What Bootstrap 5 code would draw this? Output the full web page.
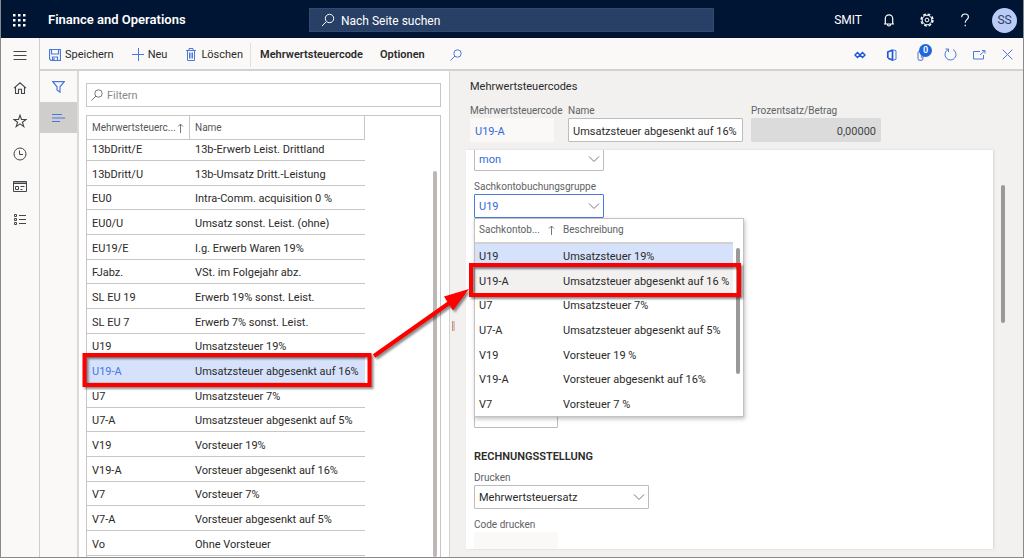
<!DOCTYPE html>
<html lang="de">
<head>
<meta charset="utf-8">
<meta name="viewport" content="width=device-width, initial-scale=1">
<title>Finance and Operations – Mehrwertsteuercodes</title>
<link rel="stylesheet" href="https://cdn.jsdelivr.net/npm/bootstrap@5.3.0/dist/css/bootstrap.min.css">
<style>
  body { font-family: Roboto, "Open Sans", sans-serif; font-size: 11px; line-height: 16px; color: #2b2a29; }
  button, input, select { font: inherit; color: inherit; }
  button { background: none; border: 0; padding: 0; }
  svg { fill: none; stroke: currentColor; display: block; flex: none; }
  a { color: inherit; text-decoration: none; }
  .shell { border: 1px solid #8a8a8a; border-top: 0; }

  .topbar { height: 38px; background: #001433; color: #fff; font-size: 12px; padding: 2px 6px 0 12px; }
  .brand { font-weight: 600; font-size: 13px; margin-left: 22px; width: 261px; }
  .page-search { background: #283f66; border: 1px solid #344a70; width: 405px; height: 24px; padding-left: 11px; }
  .page-search input { background: none; border: 0; outline: 0; padding: 2px 0 0; margin-left: 6px; }
  .page-search input::placeholder { color: #fff; opacity: 1; }
  .top-tools { gap: 20px; }
  .avatar { width: 25px; height: 25px; background: #b9ccf5; color: #2f3f63; font-size: 12px; }

  .siderail { width: 39px; background: #faf9f8; border-right: 1px solid #cfcdcb; color: #44474a; }
  .siderail button { height: 33px; }
  .actionbar { height: 33px; background: #faf9f8; border-bottom: 2px solid #d4d2d0; padding: 2px 6px 0 9px; }
  .menu-cmds { gap: 17px; }
  .cmds { gap: 18px; }
  .accent { color: #4b78dc; }
  .vsep { width: 1px; height: 24px; background: #e1dfdd; margin: 0 9px 0 7px; }
  .act-tools { gap: 16px; }
  .count { background: #1e66dc; color: #fff; width: 13px; height: 13px; font-size: 9px; line-height: 13px; top: -5px; left: 2px; }

  .viewrail { width: 39px; background: #faf9f8; border-right: 2px solid #dcdad8; }
  .viewrail button { height: 31px; }
  .viewrail .on { background: #d0cecc; }

  .listpane { width: 371px; padding: 12px 8px 0 7px; border-right: 1px solid #d6d4d2; }
  .filterbox { height: 24px; border: 1px solid #c8c6c4; padding-left: 4px; }
  .filterbox input { border: 0; outline: 0; padding: 2px 0 0; }
  .filterbox input::placeholder { color: #8b8987; opacity: 1; }
  .gridbox { margin-top: 8px; border: 1px solid #c8c6c4; border-bottom: 0; }
  .gtable { border-collapse: separate; border-spacing: 0; table-layout: fixed; width: 278px; }
  .gtable th { font-weight: 400; color: #555759; font-size: 10px; height: 24px; padding: 0 5px; border-right: 1px solid #c8c6c4; border-bottom: 1px solid #c8c6c4; white-space: nowrap; }
  .gtable td { height: 25px; padding: 3px 5px 0; line-height: 16px; border-bottom: 1px solid #c8c6c4; white-space: nowrap; }
  .gtable tbody tr:nth-child(3n) td { height: 24px; }
  .gtable tbody tr:first-child td { height: 21px; padding-top: 0; padding-bottom: 1px; }
  .gtable .picked td { background: #d6e2fb; }
  .thumb { width: 4px; border-radius: 2px; background: #9b9997; }
  .thumb-list { background: #bdb8b5; top: 55px; bottom: 0; right: 3px; }
  .thumb-pop { top: 29px; height: 126px; right: 3px; }
  .thumb-form { top: 114px; height: 138px; right: 18px; }

  .formpane { background: #f2f1f0; padding: 8px 30px 8px 16px; }
  .formpane h1 { font-size: 11px; line-height: 16px; font-weight: 400; margin: 0 0 8px 4px; }
  .flabel { display: block; font-size: 10px; line-height: 15px; color: #606264; white-space: nowrap; }
  .fbox { height: 24px; border: 1px solid #bebcba; border-radius: 1px; background-color: #fff; padding: 2px 4px 0; outline: 0; display: block; }
  .fbox.ro { background: #faf9f8; border-color: #faf9f8; }
  .fbox.off { background: #dbdbdb; border-color: #dbdbdb; color: #444; }
  select.fbox { appearance: none; background: #fff url("data:image/svg+xml,%3Csvg xmlns='http://www.w3.org/2000/svg' width='12' height='8' fill='none' stroke='%23777'%3E%3Cpath d='M1 1.5l5 5 5-5'/%3E%3C/svg%3E") no-repeat right 3px center; }
  .fbox.link-like { color: #3568d9; }
  .fbox.active { border-color: #4a79e0; }
  .w-code { width: 84px; } .w-name { width: 175px; } .w-pct { width: 130px; }
  .w-group { width: 130px; } .w-print { width: 175px; }
  .code-col { width: 90px; }
  .hdr-fields { margin-left: 4px; gap: 8px; }
  .formcard { margin-top: 8px; background: #fff; padding-left: 8px; box-shadow: 1px 0 2px rgba(0,0,0,.12); }
  .cut { margin-top: -3px; }
  .gap-field { margin-top: 8px; }
  .behind { margin-top: 186px; }
  .sect { font-size: 11px; font-weight: 600; line-height: 16px; margin: 21px 0 5px; }

  .lookup { top: 24px; left: 0; width: 270px; height: 199px; background: #fff; border: 1px solid #c4c2c0; box-shadow: 1px 2px 4px rgba(0,0,0,.25); }
  .ltable { border-collapse: separate; border-spacing: 0; table-layout: fixed; width: 258px; }
  .ltable th { font-weight: 400; font-size: 10px; color: #606264; height: 25px; padding: 0 4px 2px; border-bottom: 2px solid #d4d2d0; white-space: nowrap; }
  .ltable td { height: 25px; padding: 0 4px; white-space: nowrap; }
  .ltable tbody tr:nth-child(3n) td { height: 24px; }
  .ltable .picked td { background: #d6e2fb; }
  .ltable .hovered td { background: #f2f1f0; }
  .grip { left: 2px; top: 250px; width: 3px; height: 10px; background: #c9c9c9; border-left: 1px solid #e08a70; }
  .callouts { left: 0; top: 0; pointer-events: none; filter: drop-shadow(2px 2px 1px rgba(0,0,0,.45)); }
</style>
</head>
<body class="position-relative">
<div class="shell vh-100 d-flex flex-column overflow-hidden">

  <header class="topbar d-flex align-items-center flex-shrink-0">
    <button aria-label="Apps"><svg width="13" height="13" viewBox="0 0 13 13"><path fill="#fff" stroke="none" d="M0 0h2.500v2.500H0zM5 0h2.500v2.500H5zM10 0h2.500v2.500H10zM0 5h2.500v2.500H0zM5 5h2.500v2.500H5zM10 5h2.500v2.500H10zM0 10h2.500v2.500H0zM5 10h2.500v2.500H5zM10 10h2.500v2.500H10z"/></svg></button>
    <a href="#" class="brand text-nowrap">Finance and Operations</a>
    <div class="page-search d-flex align-items-center">
      <svg width="14" height="14" viewBox="0 0 14 14"><circle cx="8.500" cy="5.500" r="4.200"/><path d="M5.500 8.500L1 13"/></svg>
      <input class="flex-grow-1" type="search" placeholder="Nach Seite suchen" aria-label="Nach Seite suchen">
    </div>
    <div class="top-tools d-flex align-items-center ms-auto">
      <span>SMIT</span>
      <button aria-label="Benachrichtigungen"><svg width="14" height="14" viewBox="0 0 14 14"><path d="M2 11h10M3.300 11V5.500a3.700 3.700 0 0 1 7.400 0V11M5.500 11.500a1.500 1.500 0 0 0 3 0" stroke-width="1.200"/></svg></button>
      <button class="ms-1" aria-label="Einstellungen"><svg width="14" height="14" viewBox="0 0 14 14"><circle cx="7" cy="7" r="5.900" stroke-width="1.500" stroke-dasharray="2.700 1.930"/><circle cx="7" cy="7" r="4.800"/><circle cx="7" cy="7" r="1.900"/></svg></button>
      <button class="ms-1" aria-label="Hilfe"><svg width="14" height="14" viewBox="0 0 14 14"><path d="M3.700 4.200C3.700 2 5.200 1 7 1s3.400 1 3.400 3c0 2.600-3.200 2.800-3.200 5.800M7.200 11.800v1.400" stroke-width="1.200"/></svg></button>
      <button class="avatar rounded-circle d-flex align-items-center justify-content-center">SS</button>
    </div>
  </header>

  <div class="d-flex flex-grow-1 overflow-hidden">
    <nav class="siderail d-flex flex-column flex-shrink-0">
      <button class="d-flex align-items-center justify-content-center" aria-label="Menü"><svg width="14" height="14" viewBox="0 0 14 14"><path d="M.5 3.500h13M.5 7.500h13M.5 11.500h13"/></svg></button>
      <button class="d-flex align-items-center justify-content-center" aria-label="Start"><svg width="14" height="14" viewBox="0 0 14 14"><path d="M1 7.200L7 1.800l6 5.400M2.500 6v6.500h3V8.200h3v4.300h3V6" stroke-width="1.100"/></svg></button>
      <button class="d-flex align-items-center justify-content-center" aria-label="Favoriten"><svg width="14" height="14" viewBox="0 0 14 14"><path d="M7 1.200l1.500 4.300h4.500L9.400 8.200l1.400 4.400L7 9.900l-3.800 2.700 1.400-4.400L1 5.500h4.500z" stroke-width="1.100"/></svg></button>
      <button class="d-flex align-items-center justify-content-center" aria-label="Zuletzt verwendet"><svg width="14" height="14" viewBox="0 0 14 14"><circle cx="7" cy="7" r="6"/><path d="M6.500 3.500v4h3.500"/></svg></button>
      <button class="d-flex align-items-center justify-content-center" aria-label="Arbeitsbereiche"><svg width="14" height="12" viewBox="0 0 14 12"><path d="M.5.500h13v10H.5zM.5 2.500h13"/><path d="M1 1.500h12" stroke="#9aa09f"/><path d="M2.500 5.500h3v3h-3zM7.500 5.500h4M7.500 8.500h2"/></svg></button>
      <button class="d-flex align-items-center justify-content-center" aria-label="Module"><svg width="14" height="12" viewBox="0 0 14 12"><path d="M1.500.500h2v2h-2zM1.500 4.500h2v2h-2zM1.500 8.500h2v2h-2zM6 1.500h7M6 5.500h7M6 9.500h7"/></svg></button>
    </nav>

    <div class="d-flex flex-column flex-grow-1 overflow-hidden">
      <div class="actionbar d-flex align-items-center flex-shrink-0 text-nowrap">
        <div class="cmds d-flex align-items-center">
          <button class="d-flex align-items-center gap-1"><svg class="accent" width="12" height="12" viewBox="0 0 12 12"><path d="M.5.500h11v11H2L.5 10zM2.500.500v4.500h7V.500M3.500 11.500V8h5v3.500M5 9v2" stroke-width="1.200"/></svg>Speichern</button>
          <button class="d-flex align-items-center gap-1"><svg class="accent" width="12" height="13" viewBox="0 0 12 13"><path d="M6.500 0v13M0 6.500h12"/></svg>Neu</button>
          <button class="d-flex align-items-center gap-1"><svg class="accent" width="12" height="13" viewBox="0 0 12 13"><path d="M1 2.500h10M4 2.500v-2h4v2M2.500 2.500v10h7v-10M4.500 4.500v6M6 4.500v6M7.500 4.500v6"/></svg>Löschen</button>
        </div>
        <span class="vsep"></span>
        <div class="menu-cmds d-flex align-items-center">
          <button class="fw-semibold">Mehrwertsteuercode</button>
          <button class="fw-semibold">Optionen</button>
          <button class="ms-2" aria-label="Suchen"><svg class="accent" width="12" height="12" viewBox="0 0 12 12"><circle cx="7.500" cy="4.500" r="3.700"/><path d="M5 7L.5 11.500"/></svg></button>
        </div>
        <div class="act-tools accent d-flex align-items-center ms-auto me-1">
          <button class="me-1" aria-label="Verbindungen"><svg width="12" height="8" viewBox="0 0 12 8"><path d="M1 4l2.500-2.500L6 4 3.500 6.500zM6 4l2.500-2.500L11 4 8.500 6.500z" stroke="#1e5bd8" stroke-width="1.500"/></svg></button>
          <button class="me-1" aria-label="In Office öffnen"><svg width="11" height="12" viewBox="0 0 11 12"><path d="M6.500 1L1.800 3v6M2 9.200l4.500 1.800V1" stroke="#1e5bd8" stroke-width="1.700"/><path d="M6.500.700l3.500 1v8.600l-3.500 1"/></svg></button>
          <button class="position-relative" aria-label="Anlagen"><svg width="11" height="12" viewBox="0 0 11 12"><path d="M6 3v6a2.500 2.500 0 0 1-5 0V3.500a2 2 0 0 1 3.500 0V9" stroke="#7f8fd8" stroke-width="1.300"/></svg><span class="count position-absolute rounded-circle text-center fw-semibold">0</span></button>
          <button aria-label="Aktualisieren"><svg width="13" height="13" viewBox="0 0 13 13"><path d="M4 1.600a5.500 5.500 0 1 0 5 0M1.500 1h3v3"/></svg></button>
          <button aria-label="In neuem Fenster öffnen"><svg width="13" height="12" viewBox="0 0 13 12"><path d="M7 2.500H.5v7.500h10V6M7 6l5-4.500M9 1.500h3v3"/></svg></button>
          <button aria-label="Schließen"><svg width="11" height="11" viewBox="0 0 11 11"><path d="M.7.700l9.600 9.600M10.300.700L.7 10.300"/></svg></button>
        </div>
      </div>

      <div class="d-flex flex-grow-1 overflow-hidden">
        <div class="viewrail accent flex-shrink-0">
          <button class="w-100 d-flex align-items-center justify-content-center" aria-label="Filter"><svg width="13" height="12" viewBox="0 0 13 12"><path d="M.8.700h11.400L8 5.800v5.400L5 9V5.800z" stroke-width="1.200"/></svg></button>
          <button class="on w-100 d-flex align-items-center justify-content-center" aria-label="Liste"><svg width="13" height="10" viewBox="0 0 13 10"><path d="M0 1.500h10M0 5h13M0 8.500h8" stroke-width="1.200"/></svg></button>
        </div>

        <section class="listpane flex-shrink-0 d-flex flex-column">
          <div class="filterbox d-flex align-items-center flex-shrink-0">
            <svg width="12" height="12" viewBox="0 0 12 12"><g stroke="#777"><circle cx="7.500" cy="4.500" r="3.700"/><path d="M5 7L.5 11.500"/></g></svg>
            <input class="ms-1 flex-grow-1" type="search" placeholder="Filtern" aria-label="Filtern">
          </div>
          <div class="gridbox position-relative flex-grow-1 overflow-hidden">
            <table class="gtable">
              <colgroup><col style="width:103px"><col></colgroup>
              <thead><tr><th scope="col"><span class="d-flex justify-content-between align-items-center">Mehrwertsteuerc...<svg width="7" height="10" viewBox="0 0 7 10"><path d="M3.500 10V1M1 3.500L3.500 1 6 3.500" stroke="#777"/></svg></span></th><th scope="col">Name</th></tr></thead>
              <tbody>
                <tr><td>13bDritt/E</td><td>13b-Erwerb Leist. Drittland</td></tr>
                <tr><td>13bDritt/U</td><td>13b-Umsatz Dritt.-Leistung</td></tr>
                <tr><td>EU0</td><td>Intra-Comm. acquisition 0 %</td></tr>
                <tr><td>EU0/U</td><td>Umsatz sonst. Leist. (ohne)</td></tr>
                <tr><td>EU19/E</td><td>I.g. Erwerb Waren 19%</td></tr>
                <tr><td>FJabz.</td><td>VSt. im Folgejahr abz.</td></tr>
                <tr><td>SL EU 19</td><td>Erwerb 19% sonst. Leist.</td></tr>
                <tr><td>SL EU 7</td><td>Erwerb 7% sonst. Leist.</td></tr>
                <tr><td>U19</td><td>Umsatzsteuer 19%</td></tr>
                <tr class="picked"><td><a href="#" class="accent">U19-A</a></td><td>Umsatzsteuer abgesenkt auf 16%</td></tr>
                <tr><td>U7</td><td>Umsatzsteuer 7%</td></tr>
                <tr><td>U7-A</td><td>Umsatzsteuer abgesenkt auf 5%</td></tr>
                <tr><td>V19</td><td>Vorsteuer 19%</td></tr>
                <tr><td>V19-A</td><td>Vorsteuer abgesenkt auf 16%</td></tr>
                <tr><td>V7</td><td>Vorsteuer 7%</td></tr>
                <tr><td>V7-A</td><td>Vorsteuer abgesenkt auf 5%</td></tr>
                <tr><td>Vo</td><td>Ohne Vorsteuer</td></tr>
              </tbody>
            </table>
            <div class="thumb thumb-list position-absolute"></div>
          </div>
        </section>

        <main class="formpane position-relative flex-grow-1 d-flex flex-column overflow-hidden">
          <div class="grip position-absolute"></div>
          <h1>Mehrwertsteuercodes</h1>
          <div class="hdr-fields d-flex">
            <div class="code-col"><label class="flabel" for="code">Mehrwertsteuercode</label><input id="code" class="fbox ro link-like w-code" value="U19-A" readonly></div>
            <div><label class="flabel" for="name">Name</label><input id="name" class="fbox w-name" value="Umsatzsteuer abgesenkt auf 16%"></div>
            <div><label class="flabel" for="pct">Prozentsatz/Betrag</label><input id="pct" class="fbox off w-pct text-end" value="0,00000" readonly></div>
          </div>
          <div class="formcard flex-grow-1 overflow-hidden">
            <select class="fbox link-like w-group cut" aria-label="Abrechnungszeitraum"><option>mon</option></select>
            <label class="flabel gap-field" for="grp">Sachkontobuchungsgruppe</label>
            <div class="position-relative">
              <select id="grp" class="fbox link-like active w-group"><option>U19</option></select>
              <div class="lookup position-absolute">
                <table class="ltable">
                  <colgroup><col style="width:84px"><col></colgroup>
                  <thead><tr><th scope="col"><span class="d-flex justify-content-between align-items-center">Sachkontob...<svg width="7" height="10" viewBox="0 0 7 10"><path d="M3.500 10V1M1 3.500L3.500 1 6 3.500" stroke="#777"/></svg></span></th><th scope="col">Beschreibung</th></tr></thead>
                  <tbody>
                    <tr class="picked"><td>U19</td><td>Umsatzsteuer 19%</td></tr>
                    <tr class="hovered"><td>U19-A</td><td>Umsatzsteuer abgesenkt auf 16 %</td></tr>
                    <tr><td>U7</td><td>Umsatzsteuer 7%</td></tr>
                    <tr><td>U7-A</td><td>Umsatzsteuer abgesenkt auf 5%</td></tr>
                    <tr><td>V19</td><td>Vorsteuer 19 %</td></tr>
                    <tr><td>V19-A</td><td>Vorsteuer abgesenkt auf 16%</td></tr>
                    <tr><td>V7</td><td>Vorsteuer 7 %</td></tr>
                  </tbody>
                </table>
                <div class="thumb thumb-pop position-absolute"></div>
              </div>
            </div>
            <input class="fbox w-code behind" aria-label="Wert">
            <h2 class="sect">RECHNUNGSSTELLUNG</h2>
            <label class="flabel" for="print">Drucken</label>
            <select id="print" class="fbox w-print"><option>Mehrwertsteuersatz</option></select>
            <label class="flabel gap-field" for="pcode">Code drucken</label>
            <input id="pcode" class="fbox ro w-code" readonly>
          </div>
          <div class="thumb thumb-form position-absolute"></div>
        </main>
      </div>
    </div>
  </div>
</div>

<svg class="callouts position-absolute" width="760" height="400" viewBox="0 0 760 400" aria-hidden="true">
  <g stroke="#f00" stroke-width="4">
    <rect x="84.500" y="355" width="285" height="30"/>
    <rect x="471" y="265" width="268" height="30"/>
    <path d="M374 356L452 301"/>
    <path d="M469 289l-25 7.500 9 14z" fill="#f00" stroke="none"/>
  </g>
</svg>
<script src="https://cdn.jsdelivr.net/npm/bootstrap@5.3.0/dist/js/bootstrap.bundle.min.js"></script>
</body>
</html>
